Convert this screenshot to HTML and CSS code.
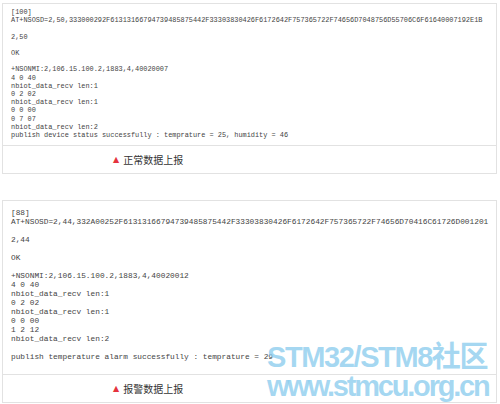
FILE: index.html
```html
<!DOCTYPE html>
<html lang="zh">
<head>
<meta charset="utf-8">
<title>NB-IoT log</title>
<link rel="stylesheet" href="styles.css">
</head>
<body>
<div class="page">
  <section class="card card-one">
    <pre class="log log-small">[100]
AT+NSOSD=2,50,333000292F61313166794739485875442F33303830426F6172642F757365722F74656D7048756D55706C6F61640007192E1B

2,50

OK

+NSONMI:2,106.15.100.2,1883,4,40020007
4 0 40
nbiot_data_recv len:1
0 2 02
nbiot_data_recv len:1
0 0 00
0 7 07
nbiot_data_recv len:2
publish device status successfully : temprature = 25, humidity = 46</pre>
    <div class="caption"><span class="tri">▲</span><span class="cap-text">正常数据上报</span></div>
  </section>

  <section class="card card-two">
    <pre class="log log-large">[88]
AT+NSOSD=2,44,332A00252F61313166794739485875442F33303830426F6172642F757365722F74656D70416C61726D001201

2,44

OK

+NSONMI:2,106.15.100.2,1883,4,40020012
4 0 40
nbiot_data_recv len:1
0 2 02
nbiot_data_recv len:1
0 0 00
1 2 12
nbiot_data_recv len:2

publish temperature alarm successfully : temprature = 29</pre>
    <div class="caption"><span class="tri">▲</span><span class="cap-text">报警数据上报</span></div>
  </section>

  <div class="watermark">
    <div class="wm-top">STM32/STM8社区</div>
    <div class="wm-bottom">www.stmcu.org.cn</div>
  </div>
</div>
</body>
</html>
```

FILE: styles.css
```css
html, body {
  margin: 0;
  padding: 0;
  background: #ffffff;
}

.page {
  position: relative;
  width: 500px;
  height: 404px;
  padding: 3px 0 0 2px;
  box-sizing: border-box;
}

.card {
  width: 495px;
  box-sizing: border-box;
  border: 1px solid #e2e2e2;
  background: #fff;
}

.card-two {
  margin-top: 26px;
}

.log {
  margin: 0;
  font-family: "Liberation Mono", "Courier New", monospace;
  color: #444;
  white-space: pre;
  overflow: hidden;
}

.log-small {
  font-size: 6.9px;
  line-height: 8.2px;
  padding: 4px 0 5px 8px;
  height: 141px;
  box-sizing: border-box;
}

.log-large {
  font-size: 7.8px;
  line-height: 9px;
  padding: 8px 0 0 8px;
  height: 173px;
  box-sizing: border-box;
}

.caption {
  border-top: 1px solid #e2e2e2;
  height: 27px;
  display: flex;
  align-items: center;
  padding-left: 110px;
  font-family: "Noto Sans CJK SC", "Liberation Sans", sans-serif;
  font-size: 10px;
  color: #333;
}

.tri {
  color: #e5323e;
  font-size: 8px;
  margin-right: 4px;
  font-family: "DejaVu Sans", sans-serif;
}

.watermark {
  position: absolute;
  left: 267px;
  top: 342px;
  font-family: "Liberation Sans", "Noto Sans CJK SC", sans-serif;
  font-weight: bold;
  color: rgba(140, 205, 238, 0.78);
  pointer-events: none;
}

.wm-top {
  font-size: 29px;
  line-height: 30px;
  letter-spacing: -1.4px;
  white-space: nowrap;
}

.wm-bottom {
  font-size: 29px;
  line-height: 29px;
  letter-spacing: -2.2px;
  white-space: nowrap;
}
```
